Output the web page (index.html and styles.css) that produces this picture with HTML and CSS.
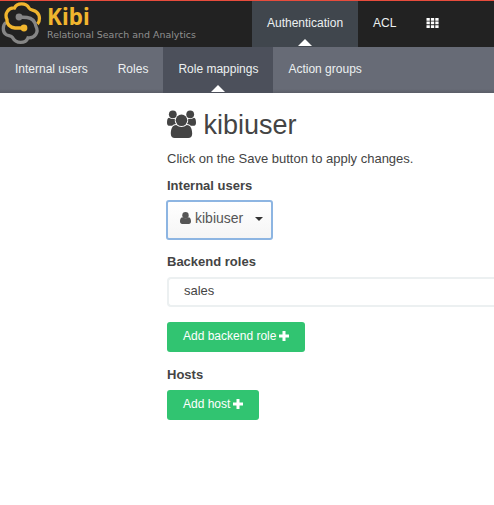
FILE: index.html
```html
<!DOCTYPE html>
<html lang="en">
<head>
<meta charset="utf-8">
<title>Kibi - Role mappings</title>
<link rel="stylesheet" href="styles.css">
</head>
<body>
<header class="topbar">
  <div class="brand">
    <svg class="logo" viewBox="0 0 42 44" fill="none" stroke-width="3.300">
      <g stroke="#858585">
        <path d="M6 21.500C2.500 24 2.300 31 6 33.500C8 35 11 34.500 12.500 36.500C16 43 25.500 43 28 36.800C35 37.500 39 31 36 25.500C35 20 31.500 17 27 16.500L19 16"/>
        <circle cx="19" cy="16" r="3.400" fill="#858585" stroke="none"/>
      </g>
      <g stroke="#f0b52e">
        <path d="M24 27L15 27C10 26.500 6.500 23 7 18.500C4 12.500 8.500 6.500 14.500 7C17 1.500 26 1.500 29 7C30.500 9.500 34 8.500 36.500 11C40.500 14.500 40 20.500 37.500 23"/>
        <circle cx="24" cy="27" r="3.400" fill="#f0b52e" stroke="none"/>
      </g>
    </svg>
    <div class="brand-text">
      <div class="brand-name">Kibi</div>
      <div class="tagline">Relational Search and Analytics</div>
    </div>
  </div>
  <nav class="tabs">
    <a class="tab active">Authentication</a>
    <a class="tab">ACL</a>
    <a class="tab"><svg class="grid-icon" viewBox="0 0 13 10" fill="#fff"><path d="M.5 0h3.300v2.700H.5zM4.900 0h3.300v2.700H4.900zM9.300 0h3.300v2.700H9.300zM.5 3.600h3.300v2.700H.5zM4.900 3.600h3.300v2.700H4.900zM9.300 3.600h3.300v2.700H9.300zM.5 7.200h3.300v2.700H.5zM4.900 7.200h3.300v2.700H4.900zM9.300 7.200h3.300v2.700H9.300z"/></svg></a>
  </nav>
</header>
<nav class="subnav">
  <a class="tab">Internal users</a>
  <a class="tab">Roles</a>
  <a class="tab active">Role mappings</a>
  <a class="tab">Action groups</a>
</nav>
<main class="content">
  <h1>
    <svg class="users-icon" viewBox="0 0 29 28" fill="currentColor"><circle cx="5.800" cy="4.300" r="3.900"/><circle cx="23.200" cy="4.300" r="3.900"/><path d="M2 7.800C.5 8 0 10 0 13C0 15 1.200 15.800 2.800 15.800H5.200C6.200 14.600 7.500 14.200 9 14C7.800 12.400 7.600 10.600 7.900 8.800C5.800 9.300 3.800 8.900 2 7.800zM27 7.800C28.500 8 29 10 29 13C29 15 27.800 15.800 26.200 15.800H23.800C22.800 14.600 21.500 14.200 20 14C21.200 12.400 21.400 10.600 21.100 8.800C23.200 9.300 25.200 8.900 27 7.800z"/><circle cx="14.500" cy="10.300" r="5.800"/><path d="M9.200 15C5.200 15.200 3.800 19 3.800 23.800C3.800 26.600 5.300 28 7.800 28H21.200C23.700 28 25.200 26.600 25.200 23.800C25.200 19 23.800 15.200 19.800 15C16.600 17.600 12.400 17.600 9.200 15z"/></svg>
    <span>kibiuser</span>
  </h1>
  <p class="hint">Click on the Save button to apply changes.</p>
  <label class="label">Internal users</label>
  <button class="select">
    <svg class="user-icon" viewBox="0 0 11 12" fill="currentColor"><circle cx="5.500" cy="3.200" r="3.200"/><path d="M2.200 5.200C.6 5.600 0 7.400 0 9.600C0 11.200.9 12 2.200 12H8.800C10.100 12 11 11.200 11 9.600C11 7.400 10.400 5.600 8.800 5.200C6.900 6.600 4.100 6.600 2.200 5.200z"/></svg>
    <span>kibiuser</span>
    <i class="caret"></i>
  </button>
  <label class="label backend">Backend roles</label>
  <div class="field">sales</div>
  <button class="add">Add backend role <svg class="plus" viewBox="0 0 10 10" fill="#fff"><path d="M3.500 0h3v3.500H10v3H6.500V10h-3V6.500H0v-3h3.500z"/></svg></button>
  <label class="label hosts">Hosts</label>
  <button class="add">Add host <svg class="plus" viewBox="0 0 10 10" fill="#fff"><path d="M3.500 0h3v3.500H10v3H6.500V10h-3V6.500H0v-3h3.500z"/></svg></button>
</main>
</body>
</html>
```
FILE: styles.css
```css
* { box-sizing: border-box; }
body {
  margin: 0;
  background: #fff;
  color: #444;
  font: 13px/18px "Liberation Sans", Arial, sans-serif;
}
.topbar {
  display: flex;
  height: 47px;
  border-top: 1px solid #e74c3c;
  background: #222;
}
.brand { display: flex; width: 252px; }
.logo { width: 42px; height: 44px; margin: 0; }
.brand-text { padding: 3px 0 0 5px; white-space: nowrap; }
.brand-name {
  color: #f0b52e;
  font: bold 22.500px/25px "Noto Sans", sans-serif;
}
.tagline {
  color: #909090;
  font: 9.450px/11px "DejaVu Sans", sans-serif;
}
.tabs, .subnav { display: flex; }
.tab {
  position: relative;
  padding: 14px 15px 0;
  color: #ecf0f1;
  font-size: 12px;
  line-height: 17px;
  white-space: nowrap;
}
.tabs .active { background: #40464d; }
.subnav {
  height: 46px;
  background: linear-gradient(#676b76 42px, #5b5e68);
}
.subnav .active { background: #4c505b; }
.tab.active::after {
  content: "";
  position: absolute;
  left: calc(50% - 7px);
  bottom: 1px;
  border: solid transparent;
  border-width: 0 7px 7px;
  border-bottom-color: #fff;
}
.grid-icon { display: block; width: 13px; height: 10px; margin-top: 3px; }
.content {
  display: flex;
  flex-direction: column;
  align-items: flex-start;
  margin-left: 167px;
  padding-top: 17px;
}
h1 {
  display: flex;
  gap: 7.500px;
  margin: 0;
  font-size: 27px;
  font-weight: normal;
  line-height: 31px;
}
.users-icon { width: 29px; height: 28px; }
.hint { margin: 9px 0 9px; }
.label { font-weight: bold; }
.select {
  display: flex;
  width: 107px;
  height: 40px;
  margin: 5px 0 0 -1px;
  padding: 8px 8px 0 13px;
  border: 2px solid #8db5e2;
  border-radius: 3px;
  background: linear-gradient(#fff, #f5f5f5);
  color: #555;
  font: 14px/16px "Liberation Sans", Arial, sans-serif;
}
.user-icon { width: 11px; height: 12px; margin: 2px 4px 0 -1px; }
.caret {
  margin: 7px 0 0 auto;
  border: solid transparent;
  border-width: 4px 4px 0;
  border-top-color: #333;
}
.backend { margin-top: 13px; }
.field {
  align-self: stretch;
  height: 30px;
  margin: 6px 0 15px;
  padding: 3px 15px;
  border: 2px solid #ecf0f1;
  border-right: 0;
  border-radius: 4px 0 0 4px;
  line-height: 18px;
}
.add {
  display: flex;
  gap: 3px;
  height: 30px;
  padding: 6px 16px;
  border: 0;
  border-radius: 3px;
  background: #31c471;
  color: #fff;
  font: 12px/17px "Liberation Sans", Arial, sans-serif;
}
.plus { width: 10px; height: 10px; margin-top: 3px; }
.hosts { margin: 14px 0 6px; }
```
